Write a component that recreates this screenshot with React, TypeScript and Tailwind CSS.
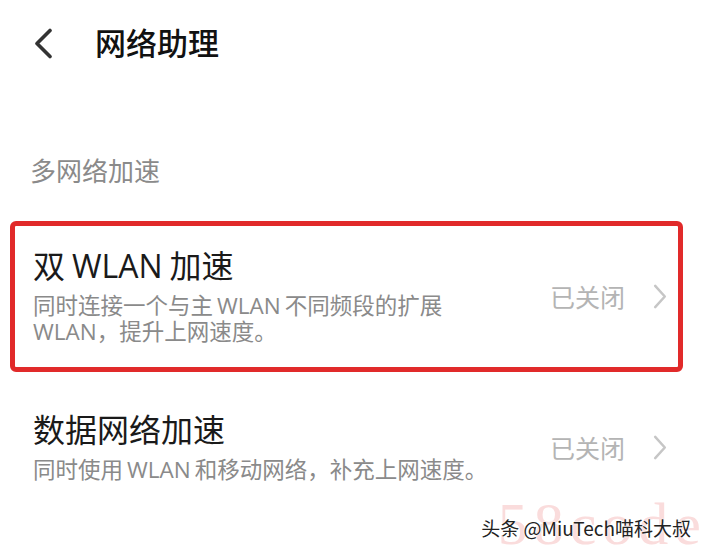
import { ReactNode } from "react";

const FONT = { fontFamily: '"Open Sans", "Noto Sans CJK SC", sans-serif' };

function Chevron({ className }: { className?: string }) {
  return (
    <svg viewBox="0 0 14 26" className={className} fill="none">
      <path d="M2 2l10 11L2 24" stroke="currentColor" strokeWidth="2.6" strokeLinecap="round" strokeLinejoin="round" />
    </svg>
  );
}

// Latin words in the reference sit with a small gap on each side.
function W({ children, gap = "mx-[4px]" }: { children: ReactNode; gap?: string }) {
  return <span className={gap}>{children}</span>;
}

function Row({ title, desc }: { title: ReactNode; desc: ReactNode }) {
  return (
    <div className="flex items-center">
      <div className="flex-1">
        <div className="text-[32px] leading-[36px] text-[#1a1a1a]">{title}</div>
        <div className="mt-[9px] text-[22.5px] leading-[26px] text-[#8a8a8a]">{desc}</div>
      </div>
      <span className="text-[25px] leading-[30px] text-[#b4b4b4]">已关闭</span>
      <Chevron className="ml-[28px] h-[25px] w-[14px] text-[#c6c6c6]" />
    </div>
  );
}

export default function App() {
  return (
    <div className="relative h-[555px] w-[707px] overflow-hidden bg-white" style={FONT}>
      <header className="flex h-[86px] items-center pl-[33px]">
        <svg viewBox="0 0 20 31" className="h-[31px] w-[20px] text-[#333]" fill="none">
          <path d="M17 2.5L4 15.5l13 13" stroke="currentColor" strokeWidth="3.6" strokeLinecap="round" strokeLinejoin="round" />
        </svg>
        <h1 className="ml-[42px] text-[31px] font-medium leading-[40px] text-[#111]">网络助理</h1>
      </header>

      <div className="mt-[65px] flex h-[40px] items-center pl-[30px] text-[26px] text-[#8a8a8a]">多网络加速</div>

      <div className="ml-[10px] mt-[30px] h-[151px] w-[673px] rounded-[6px] border-[5px] border-[#e12a2a] pl-[18px] pr-[11px] pt-[22px]">
        <Row
          title={
            <>
              双<W gap="mx-[7px]">WLAN</W>加速
            </>
          }
          desc={
            <>
              同时连接一个与主<W>WLAN</W>不同频段的扩展
              <br />
              WLAN，提升上网速度。
            </>
          }
        />
      </div>

      <div className="mt-[40px] pl-[33px] pr-[40px]">
        <Row
          title="数据网络加速"
          desc={
            <>
              同时使用<W>WLAN</W>和移动网络，补充上网速度。
            </>
          }
        />
      </div>

      {/* watermark overlay */}
      <div
        className="absolute bottom-[4px] right-[0px] text-[60px] leading-[54px] tracking-[6px] text-[#fadcdc]"
        style={{ fontFamily: '"Liberation Serif", serif' }}
      >
        58code
      </div>
      <div
        className="absolute bottom-[16px] right-[16px] text-[19px] leading-[22px] text-[#222]"
        style={{ fontFamily: '"Noto Sans CJK SC", sans-serif', textShadow: "0 0 2px #fff, 0 0 2px #fff" }}
      >
        头条 @MiuTech喵科大叔
      </div>
    </div>
  );
}
